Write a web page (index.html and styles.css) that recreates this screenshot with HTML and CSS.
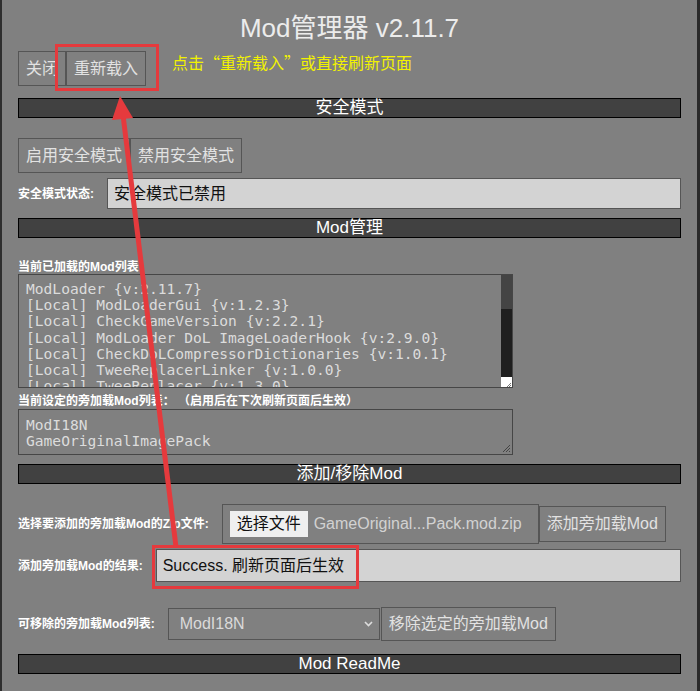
FILE: index.html
```html
<!DOCTYPE html>
<html lang="zh">
<head>
<meta charset="utf-8">
<title>Mod管理器</title>
<link rel="stylesheet" href="styles.css">
</head>
<body>
<div class="page">
  <div class="panel">
    <h1 class="title">Mod管理器 v2.11.7</h1>
    <div class="top-row">
      <button class="btn">关闭</button><button class="btn">重新载入</button>
      <span class="hint">点击“重新载入”或直接刷新页面</span>
    </div>
    <div class="bar bar-first">安全模式</div>
    <div class="btn-row">
      <button class="btn">启用安全模式</button><button class="btn">禁用安全模式</button>
    </div>
    <div class="field-row status-row">
      <span class="lbl">安全模式状态:</span>
      <div class="input status-input">安全模式已禁用</div>
    </div>
    <div class="bar bar-mid">Mod管理</div>
    <div class="lbl list-lbl">当前已加载的Mod列表</div>
    <div class="textbox loaded">
      <div class="lines">ModLoader {v:2.11.7}
[Local] ModLoaderGui {v:1.2.3}
[Local] CheckGameVersion {v:2.2.1}
[Local] ModLoader DoL ImageLoaderHook {v:2.9.0}
[Local] CheckDoLCompressorDictionaries {v:1.0.1}
[Local] TweeReplacerLinker {v:1.0.0}
[Local] TweeReplacer {v:1.3.0}</div>
      <div class="scrollbar"><div class="thumb"></div><div class="track"></div><div class="corner"><svg width="10" height="5" viewBox="0 0 10 5"><path d="M9 1 L5 5 M9 3 L7 5" stroke="#777" stroke-width="1"/></svg></div></div>
    </div>
    <div class="lbl side-lbl">当前设定的旁加载Mod列表： （启用后在下次刷新页面后生效）</div>
    <div class="textbox side">
      <div class="lines">ModI18N
GameOriginalImagePack</div>
      <svg class="grip" width="9" height="9" viewBox="0 0 9 9"><path d="M8 1 L1 8 M8 4 L4 8 M8 7 L7 8" stroke="#444" stroke-width="1"/></svg>
    </div>
    <div class="bar bar-mid">添加/移除Mod</div>
    <div class="field-row file-row">
      <span class="lbl">选择要添加的旁加载Mod的Zip文件:</span>
      <div class="file-box"><span class="file-btn">选择文件</span><span class="file-name">GameOriginal...Pack.mod.zip</span></div>
      <button class="btn">添加旁加载Mod</button>
    </div>
    <div class="field-row result-row">
      <span class="lbl">添加旁加载Mod的结果:</span>
      <div class="input result-input">Success. 刷新页面后生效</div>
    </div>
    <div class="field-row remove-row">
      <span class="lbl">可移除的旁加载Mod列表:</span>
      <div class="select"><span>ModI18N</span><svg width="9" height="6" viewBox="0 0 9 6"><path d="M1 1 L4.5 4.5 L8 1" fill="none" stroke="#ddd" stroke-width="1.6"/></svg></div>
      <button class="btn">移除选定的旁加载Mod</button>
    </div>
    <div class="bar bar-last">Mod ReadMe</div>
  </div>
  <svg class="annot" width="700" height="691" viewBox="0 0 700 691">
    <rect x="56.5" y="45.5" width="101" height="44" fill="none" stroke="#e53a3d" stroke-width="3"/>
    <rect x="153.5" y="546.5" width="204" height="41" fill="none" stroke="#e53a3d" stroke-width="3"/>
    <line x1="176" y1="547" x2="123" y2="115" stroke="#e53a3d" stroke-width="5"/>
    <polygon points="120,96 133,118 112,120" fill="#e53a3d"/>
  </svg>
</div>
</body>
</html>
```

FILE: styles.css
```css
* { box-sizing: border-box; }
html, body { margin: 0; padding: 0; background: #808080; }
body { font-family: "Liberation Sans", "Noto Sans CJK SC", sans-serif; }

.page {
  position: relative;
  width: 700px;
  height: 691px;
  overflow: hidden;
}

.panel {
  height: 691px;
  background: #808080;
  border-left: 2px solid #2e2e2e;
  border-right: 3px solid #2a2a2a;
  padding: 0 16px;
  display: flex;
  flex-direction: column;
}

.title {
  margin: 12px 0 0;
  font-size: 26px;
  line-height: 32px;
  font-weight: normal;
  color: #ececec;
  text-align: center;
}

.top-row {
  margin-top: 7px;
  display: flex;
  align-items: flex-start;
}

.btn {
  height: 35px;
  padding: 0 7px;
  border: 1px solid #555;
  background: #808080;
  color: #e2e2e2;
  font-family: "Liberation Sans", "Noto Sans CJK SC", sans-serif;
  font-size: 16px;
  line-height: 33px;
  margin: 0;
}

.hint {
  margin-left: 26px;
  font-family: "Noto Sans CJK SC", sans-serif;
  font-size: 16px;
  line-height: 22px;
  color: #f2f200;
}

.bar {
  height: 20px;
  border: 1px solid #000;
  background: #414141;
  color: #fff;
  font-size: 17px;
  line-height: 18px;
  text-align: center;
}
.bar-first { margin-top: 12px; }
.bar-mid { margin-top: 9px; }
.bar-last { margin-top: 13px; }

.btn-row {
  margin-top: 20px;
  display: flex;
}

.field-row {
  display: flex;
  align-items: center;
}

.lbl {
  font-size: 12px;
  font-weight: bold;
  color: #fff;
  line-height: 14px;
  white-space: nowrap;
}
.field-row .lbl { margin-right: 13px; }

.input {
  flex: 1;
  background: #d3d3d3;
  border: 1px solid #555;
  color: #111;
  font-size: 16px;
  padding-left: 6px;
}

.status-row { margin-top: 5px; }
.status-input { height: 31px; line-height: 29px; }

.list-lbl { margin-top: 22px; }

.textbox {
  position: relative;
  width: 495px;
  border: 1px solid #464646;
  background: #808080;
  overflow: hidden;
}
.lines {
  white-space: pre;
  font-family: "DejaVu Sans Mono", "Liberation Mono", monospace;
  font-size: 14.6px;
  line-height: 16.2px;
  color: #dcdcdc;
  padding: 6px 0 0 7px;
}
.loaded { height: 114px; }
.side-lbl { margin-top: 6px; }
.side { margin-top: 1px; height: 46px; }
.side .lines { padding-top: 7px; }

.scrollbar {
  position: absolute;
  top: 0;
  right: 0;
  width: 11px;
  height: 100%;
  display: flex;
  flex-direction: column;
}
.thumb { height: 34px; background: #444; }
.track { flex: 1; background: #1f1f1f; }
.corner {
  height: 10px;
  background: #fff;
  display: flex;
  align-items: flex-end;
  justify-content: flex-end;
}
.grip { position: absolute; right: 1px; bottom: 1px; }

.file-row { margin-top: 20px; height: 40px; }
.file-box {
  display: flex;
  align-items: center;
  height: 40px;
  width: 317px;
  border: 1px solid #555;
  padding-left: 7px;
}
.file-btn {
  background: #efefef;
  color: #111;
  font-size: 16px;
  height: 26px;
  line-height: 26px;
  padding: 0 7px;
}
.file-name {
  margin-left: 6px;
  font-size: 16px;
  color: #d2d2d2;
  white-space: nowrap;
}
.file-row .btn { height: 36px; line-height: 34px; }

.result-row { margin-top: 5px; }
.result-input { height: 33px; line-height: 31px; }

.remove-row { margin-top: 25px; height: 34px; }
.select {
  width: 212px;
  height: 32px;
  border: 1px solid #555;
  background: #808080;
  color: #dadada;
  font-size: 16px;
  display: flex;
  align-items: center;
  justify-content: space-between;
  padding: 0 6px 0 11px;
}
.remove-row .btn { height: 34px; line-height: 32px; margin-left: 1px; }

.annot {
  position: absolute;
  top: 0;
  left: 0;
  pointer-events: none;
}
```
